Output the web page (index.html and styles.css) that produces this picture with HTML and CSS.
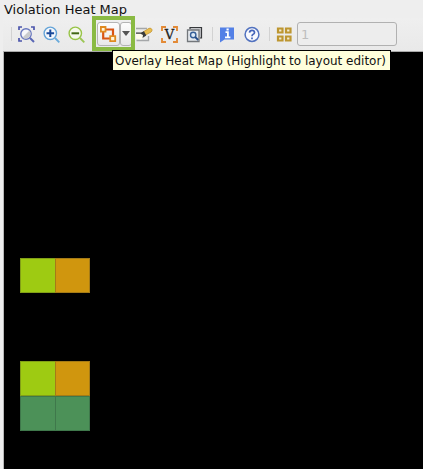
FILE: index.html
```html
<!DOCTYPE html>
<html lang="en">
<head>
<meta charset="utf-8">
<title>Violation Heat Map</title>
<link rel="stylesheet" href="styles.css">
</head>
<body>
<main class="panel">
  <h1 class="title"><svg class="label" width="130" height="18"><text x="0" y="14" textLength="123" lengthAdjust="spacingAndGlyphs">Violation Heat Map</text></svg></h1>
  <div class="toolbar">
    <i class="sep"></i>
    <svg class="icon fit" viewBox="0 0 17 17"><path d="M1 4V1h3M13 1h3v3M1 12v3h3" fill="none" stroke="#4c55ac" stroke-width="1.7"/><circle cx="8" cy="8" r="5.2" fill="#f7f8fb" stroke="#6675be" stroke-width="1.4"/><path d="M4.5 11.5 11.5 4.5A5 5 0 0 1 4.5 11.5" fill="#c9cbcd"/><path d="m12 12 4 4" stroke="#5967b5" stroke-width="2"/></svg>
    <svg class="icon zin" viewBox="0 0 17 17"><circle cx="7.3" cy="7.3" r="6.2" fill="#f4f8fc" stroke="#65a4d8" stroke-width="1.4"/><path d="m12 12 4.3 4.3" stroke="#68aadb" stroke-width="1.8"/><path d="M3.5 7.3h7.6M7.3 3.5v7.6" stroke="#194a9b" stroke-width="2"/></svg>
    <svg class="icon zout" viewBox="0 0 17 17"><circle cx="7.3" cy="7.3" r="6.2" fill="#f6f9ee" stroke="#98c448" stroke-width="1.4"/><path d="m12 12 4.3 4.3" stroke="#9bc653" stroke-width="1.8"/><path d="M3.5 7.3h7.6" stroke="#426715" stroke-width="2"/></svg>
    <div class="split">
      <button class="tool" aria-label="Overlay Heat Map"><svg class="icon" viewBox="0 0 17 17"><path d="M6 3.5h7v7M3.2 6v6.5H11" fill="none" stroke="#d95414" stroke-width="2.2"/><path d="M.9 1h4.6v4.6H.9zM10.2 10.2h5v5h-5z" fill="#fff6dc" stroke="#e08a20" stroke-width="1.8"/></svg></button>
      <button class="drop" aria-label="Options"><svg width="10" height="6"><path d="M1 0h8L5 5z" fill="#555"/></svg></button>
    </div>
    <svg class="icon torch" viewBox="0 0 17 17"><path d="M0 2.5h11M.5 14.5h12V10" fill="none" stroke="#a5a7a9" stroke-width="1.4"/><path d="m7 6 6-3.7q2-.7 2.8 1t-.8 2.8L9.5 9z" fill="#e9bd4d" stroke="#bd8c29" stroke-width=".7"/><path d="M0 7.5 6 5.8 9 10l-4 3.5-5-1z" fill="#fffbea"/><path d="M0 6.6h5L8 5.3l2.3 4.3L6.5 12 7 9 4.5 7.8H0z" fill="#393b3c"/></svg>
    <svg class="icon vee" viewBox="0 0 17 17"><path d="M1 5V1h4M12 1h4v4M1 12v4h4M12 16h4v-4" fill="none" stroke="#e38a36" stroke-width="1.9"/><text class="letter" x="8.5" y="12.6" text-anchor="middle">V</text></svg>
    <svg class="icon wins" viewBox="0 0 17 17"><path d="M4 3V1.5h11.5V12H14" fill="#c4c6c9" stroke="#36383b" stroke-width="1.2"/><path d="M1.5 4h11.5v11.5H1.5z" fill="#e4e8ed" stroke="#73777b" stroke-width="1.3"/><circle cx="7.2" cy="9" r="2.7" fill="#dce9f6" stroke="#355f98" stroke-width="1.4"/><path d="m9.2 11 3 3" stroke="#244b86" stroke-width="1.8"/></svg>
    <i class="sep sep2"></i>
    <svg class="icon info" viewBox="0 0 17 17"><path d="M1 1.5h14v12H5.5L1 16.5z" fill="#5380e6"/><path d="M6.5 6.2h2.4V11M6 11.3h5.4M7.5 3.5h2.2" fill="none" stroke="#fff" stroke-width="1.8"/></svg>
    <svg class="icon help" viewBox="0 0 17 17"><circle cx="8" cy="8.5" r="6.9" fill="#f8f9fd" stroke="#5272bf" stroke-width="1.5"/><path d="M5.5 6.6q.2-2.3 2.5-2.3t2.5 2.1q0 1.3-1.3 1.9T8 10.3M8 11.4v1.8" fill="none" stroke="#4666ba" stroke-width="1.7"/></svg>
    <i class="sep sep3"></i>
    <svg class="icon tiles" viewBox="0 0 17 17"><path d="M2 2.5h4.5v4H2zM10 2.5h4.5v4H10zM2 10.5h4.5v4H2zM10 10.5h4.5v4H10z" fill="#f3ead0" stroke="#bd9630" stroke-width="2.2"/></svg>
    <input class="count" value="1" disabled aria-label="Count">
  </div>
  <section class="canvas">
    <div class="tip"><svg class="tiptext" width="274" height="18"><text x="0" y="14" textLength="271" lengthAdjust="spacingAndGlyphs">Overlay Heat Map (Highlight to layout editor)</text></svg></div>
    <div class="map first"><i class="cell lime"></i><i class="cell amber"></i></div>
    <div class="map second"><i class="cell lime"></i><i class="cell amber"></i><i class="cell green"></i><i class="cell green"></i></div>
  </section>
</main>
</body>
</html>
```
FILE: styles.css
```css
* { box-sizing: border-box; }
body { margin: 0; background: #eee; font-family: "DejaVu Sans", sans-serif; overflow: hidden; }
.panel { width: 423px; height: 469px; display: flex; flex-direction: column; padding-left: 3px; }
.title { margin: 0; height: 18px; padding-left: 1px; font-size: 13px; font-weight: 400; }
.label, .tiptext { display: block; fill: #111; overflow: visible; }
.toolbar { height: 33px; display: flex; align-items: center; padding: 0 0 1px 8px; background: linear-gradient(#efefef, #e9e9e9); }
.icon { display: block; width: 17px; height: 17px; flex: none; }
.sep { width: 1px; height: 14px; background: #d2d2d2; flex: none; }
.fit { margin-left: 6px; }
.zin { margin-left: 8px; }
.zout { margin-left: 8px; }
.split { position: relative; display: flex; width: 35px; height: 24px; margin-left: 12px; flex: none; }
.split::after { content: ""; box-sizing: border-box; position: absolute; left: -5px; top: -6px; width: 43px; height: 35px; border: 4px solid #8aba43; z-index: 2; }
.tool, .drop { display: flex; align-items: center; justify-content: center; padding: 0; border: 1px solid #b4b4b4; border-radius: 3px; background: linear-gradient(#fdfdfd, #e8e8e8); }
.tool { width: 23px; }
.drop { width: 12px; }
.drop svg { flex: none; }
.torch { margin-left: 4px; }
.vee { margin-left: 8px; }
.letter { font: 13px "DejaVu Serif", serif; fill: #222; stroke: #222; stroke-width: .3px; }
.wins { margin-left: 8px; }
.sep2 { margin-left: 9px; }
.info { margin-left: 6px; }
.help { margin-left: 8px; }
.sep3 { margin-left: 8px; }
.tiles { margin-left: 6px; }
.count { width: 100px; height: 24px; margin-left: 4px; padding: 0 3px; border: 1px solid #b1b1b1; border-radius: 3px; background: #ededed; color: #bebebe; font: 13px "DejaVu Sans", sans-serif; }
.canvas { position: relative; flex: 1; background: #000; border-left: 1px solid #b7b7b7; border-top: 1px solid #a9a9a9; padding: 206px 0 0 16px; }
.tip { position: absolute; left: 108px; top: -2px; width: 279px; height: 21px; border: 1px solid #000; background: #ffffdc; padding-left: 2px; font-size: 12px; z-index: 3; }
.map { display: grid; grid-template-columns: 35px 35px; grid-auto-rows: 35px; width: 70px; }
.second { margin-top: 68px; }
.cell { border: 1px solid; border-right-width: 0; }
.cell:nth-child(even) { border-right-width: 1px; }
.lime { background: #9ecb12; border-color: #829f17; }
.amber { background: #d0960e; border-color: #a57b16; }
.green { background: #4c9158; border-color: #3f784b; }
```
